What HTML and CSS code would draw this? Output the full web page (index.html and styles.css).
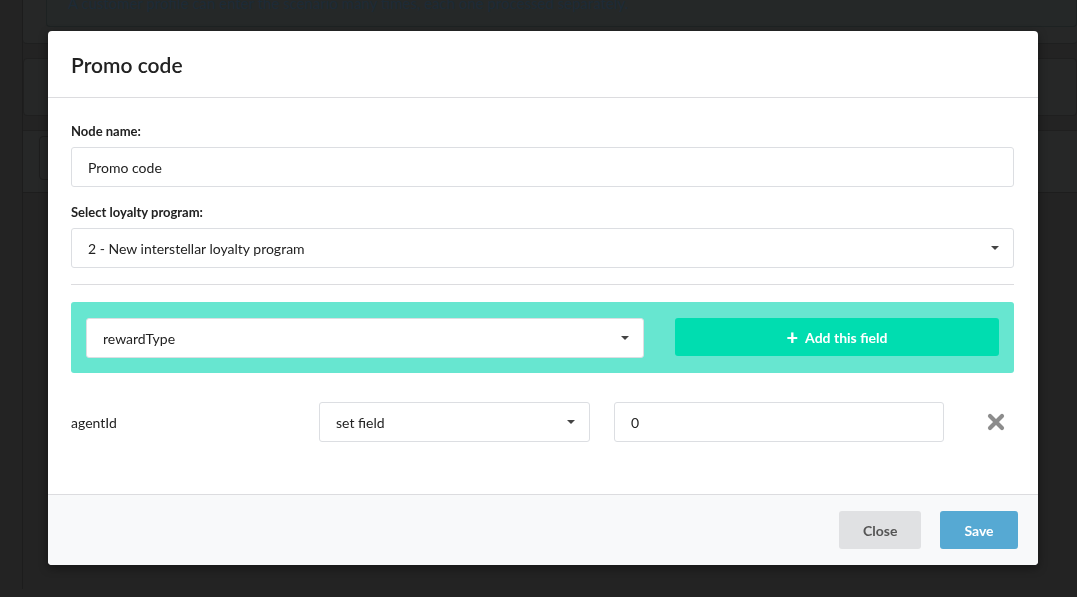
FILE: index.html
```html
<!DOCTYPE html>
<html>
<head>
    <title>Promo code</title>
    <link rel="stylesheet" href="styles.css">
</head>
<body>
    <div class="page">
        <div class="panel panel-top">
            <div class="note">A customer profile can enter the scenario many times, each one processed separately.</div>
        </div>
        <div class="panel panel-mid"></div>
        <div class="panel panel-low">
            <div class="inner-box"></div>
        </div>
    </div>

    <div class="overlay">
        <div class="modal">
            <div class="modal-header">
                <h2>Promo code</h2>
            </div>
            <div class="modal-body">
                <label for="nodeName">Node name:</label>
                <input type="text" id="nodeName" class="field" value="Promo code">

                <label for="program">Select loyalty program:</label>
                <div class="select field">
                    <span>2 - New interstellar loyalty program</span>
                    <span class="caret"></span>
                </div>

                <hr>

                <div class="add-box">
                    <div class="select field">
                        <span>rewardType</span>
                        <span class="caret"></span>
                    </div>
                    <button class="btn-add"><span class="plus">+</span> Add this field</button>
                </div>

                <div class="field-row">
                    <div class="field-name">agentId</div>
                    <div class="select field small">
                        <span>set field</span>
                        <span class="caret"></span>
                    </div>
                    <input type="text" class="field value" value="0">
                    <span class="remove">
                        <svg width="20" height="20" viewBox="0 0 20 20">
                            <path d="M4 4 L16 16 M16 4 L4 16" stroke="#8c8c8c" stroke-width="4.2" stroke-linecap="round"/>
                        </svg>
                    </span>
                </div>
            </div>
            <div class="modal-footer">
                <button class="btn btn-close">Close</button>
                <button class="btn btn-save">Save</button>
            </div>
        </div>
    </div>
</body>
</html>
```

FILE: styles.css
```css
body {
    margin: 0;
    padding: 0;
    font-family: Lato, "Open Sans", sans-serif;
    background-color: #232323;
    height: 597px;
    overflow: hidden;
}

.page {
    margin-left: 22px;
    border-left: 1px solid #1c1c1c;
    height: 597px;
}

.panel {
    background-color: #262727;
    border-bottom: 1px solid #1e1f1f;
}

.panel-top {
    height: 51px;
    padding: 0 0 0 23px;
    margin-top: -8px;
    border-radius: 0 0 4px 4px;
}

.note {
    height: 34px;
    padding-left: 21px;
    border: 1px solid #1d2222;
    border-top: none;
    border-radius: 0 0 4px 4px;
    background-color: #252828;
    color: #1c2b37;
    font-size: 15px;
    line-height: 22px;
    overflow: hidden;
}

.panel-mid {
    height: 56px;
    margin-top: 14px;
    border-radius: 4px;
    border: 1px solid #1f1f1f;
}

.panel-low {
    height: 56px;
    margin-top: 14px;
    padding: 5px 0 0 16px;
    border-top: 1px solid #1f1f1f;
    border-bottom: 1px solid #1d1d1d;
}

.inner-box {
    height: 42px;
    width: 60px;
    border: 1px solid #1e1e1e;
    border-radius: 4px;
}

.overlay {
    position: fixed;
    top: 0;
    left: 0;
    right: 0;
    bottom: 0;
}

.modal {
    position: absolute;
    left: 48px;
    top: 31px;
    width: 990px;
    background-color: #fff;
    border-radius: 4px;
    box-shadow: 0 3px 10px rgba(0, 0, 0, 0.4);
    overflow: hidden;
}

.modal-header {
    height: 66px;
    padding: 0 23px;
    display: flex;
    align-items: center;
    border-bottom: 1px solid #dcdcdf;
}

.modal-header h2 {
    margin: 0;
    font-size: 21px;
    font-weight: 600;
    color: #222;
}

.modal-body {
    padding: 25px 24px 52px 23px;
}

label {
    display: block;
    font-size: 13px;
    font-weight: 700;
    color: #222;
    margin-bottom: 8px;
}

.field {
    box-sizing: border-box;
    height: 40px;
    border: 1px solid #dcdee2;
    border-radius: 3px;
    background-color: #fff;
    font-family: inherit;
    font-size: 14px;
    color: #222;
    padding: 0 16px;
}

input.field {
    display: block;
    width: 100%;
    margin-bottom: 17px;
}

.select {
    display: flex;
    align-items: center;
    justify-content: space-between;
    padding-right: 14px;
}

.caret {
    width: 0;
    height: 0;
    border-left: 4px solid transparent;
    border-right: 4px solid transparent;
    border-top: 4px solid #444;
}

hr {
    border: none;
    border-top: 1px solid #dcdcdf;
    margin: 16px 0 17px;
}

.add-box {
    display: flex;
    align-items: center;
    gap: 31px;
    background-color: #67e6d0;
    border-radius: 3px;
    padding: 16px 15px 15px 15px;
}

.add-box .select {
    flex: 0 0 558px;
}

.btn-add {
    flex: 1;
    height: 38px;
    border: none;
    border-radius: 3px;
    background-color: #00ddb0;
    color: #fff;
    font-family: inherit;
    font-size: 14px;
    font-weight: 700;
    margin-top: -2px;
}

.plus {
    font-size: 20px;
    font-weight: 900;
    vertical-align: -2px;
    margin-right: 4px;
}

.field-row {
    display: flex;
    align-items: center;
    margin-top: 29px;
}

.field-name {
    width: 248px;
    font-size: 14px;
    color: #222;
}

.field-row .small {
    width: 271px;
}

.field-row input.value {
    width: 330px;
    margin: 0 0 0 24px;
}

.remove {
    margin-left: 42px;
    display: flex;
}

.modal-footer {
    background-color: #f8f9fa;
    border-top: 1px solid #dcdcdf;
    height: 70px;
    display: flex;
    justify-content: flex-end;
    align-items: center;
    gap: 19px;
    padding: 0 20px;
}

.btn {
    height: 38px;
    border: none;
    border-radius: 3px;
    font-family: inherit;
    font-size: 14px;
    font-weight: 700;
    padding: 0 24px;
}

.btn-close {
    background-color: #e0e1e3;
    color: #555;
    width: 82px;
}

.btn-save {
    background-color: #56a9d3;
    color: #fff;
    width: 78px;
}
```
